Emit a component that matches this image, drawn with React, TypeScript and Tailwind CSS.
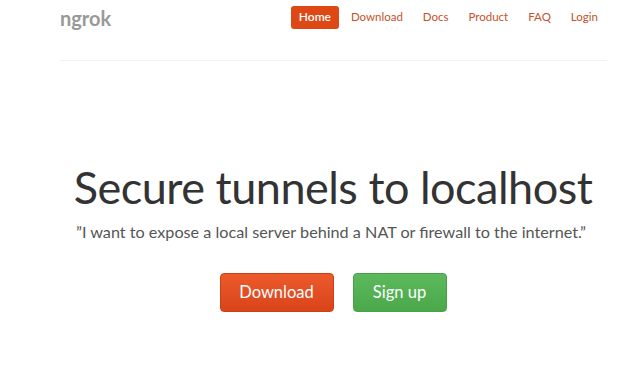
export default function App() {
  const font = { fontFamily: 'Lato, "Open Sans", sans-serif' };
  return (
    <div className="w-[640px] h-[370px] bg-white overflow-hidden" style={font}>
      <div className="ml-[60px] w-[547px]">
        <header className="flex items-center justify-between h-[33px] pt-[1px]">
          <div className="text-[20px] font-bold text-[#999] leading-none mt-[1px]">ngrok</div>
          <nav className="flex items-center text-[11.5px] text-[#c4522a] mr-[9px]">
            <a className="bg-[#dd4814] text-white rounded-[3px] w-[48px] justify-center h-[23px] flex items-center mr-[12px] font-semibold text-[12px]">Home</a>
            <a className="mr-[20px]">Download</a>
            <a className="mr-[20px]">Docs</a>
            <a className="mr-[20px]">Product</a>
            <a className="mr-[20px]">FAQ</a>
            <a>Login</a>
          </nav>
        </header>
        <div className="h-[1px] bg-[#f2f2f2] mt-[27px]" />
      </div>
      <main className="flex flex-col items-center mt-[104px]">
        <h1 className="text-[45px] leading-none text-[#333] tracking-[-0.5px] ml-[26px]">Secure tunnels to localhost</h1>
        <p className="text-[16.2px] text-[#555] mt-[10px] ml-[22px]">”I want to expose a local server behind a NAT or firewall to the internet.”</p>
        <div className="flex gap-[19px] mt-[29px] ml-[26px]">
          <button className="w-[114px] h-[39px] rounded-[4px] text-white text-[16.5px] bg-gradient-to-b from-[#ec5a2c] to-[#d9431a] border border-[#cc4016]">Download</button>
          <button className="w-[94px] h-[39px] rounded-[4px] text-white text-[16.5px] bg-gradient-to-b from-[#5cba5c] to-[#4aa84a] border border-[#48a048]">Sign up</button>
        </div>
      </main>
    </div>
  );
}
